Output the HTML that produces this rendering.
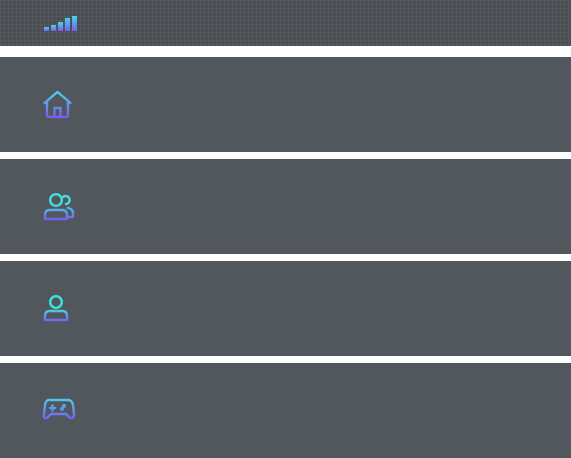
<!DOCTYPE html>
<html><head><style>
body{margin:0;width:571px;height:458px;background:#fff;position:relative;overflow:hidden}
.p{position:absolute;left:0;width:571px;background:#51575c}
.top{position:absolute;left:0;top:0;width:571px;height:46px;background-color:#4b4f53;
background-image:linear-gradient(rgba(255,255,255,.04) 1px,transparent 1px),linear-gradient(90deg,rgba(255,255,255,.04) 1px,transparent 1px);background-size:4px 4px}
svg{position:absolute}
</style></head><body>
<div class="top"></div>
<svg style="left:0;top:0" width="100" height="46">
<defs><linearGradient id="b" x1="0" y1="0" x2="0" y2="1"><stop offset="0" stop-color="#3fd9e6"/><stop offset="1" stop-color="#7a5cf0"/></linearGradient></defs>
<rect x="44" y="27" width="5" height="4" fill="url(#b)"/>
<rect x="51" y="25" width="5" height="6" fill="url(#b)"/>
<rect x="58" y="22" width="5" height="9" fill="url(#b)"/>
<rect x="65" y="18" width="5" height="13" fill="url(#b)"/>
<rect x="72" y="16" width="5" height="15" fill="url(#b)"/>
</svg>
<div class="p" style="top:57px;height:95px"></div>
<div class="p" style="top:159px;height:95px"></div>
<div class="p" style="top:261px;height:95px"></div>
<div class="p" style="top:363px;height:95px"></div>
<svg style="left:0;top:0" width="100" height="458" fill="none" stroke-width="2.4" stroke-linecap="round" stroke-linejoin="round">
<defs>
<linearGradient id="g1" gradientUnits="userSpaceOnUse" x1="0" y1="91" x2="0" y2="118"><stop offset="0" stop-color="#45d6ea"/><stop offset="1" stop-color="#7a58ee"/></linearGradient>
<linearGradient id="g2" gradientUnits="userSpaceOnUse" x1="0" y1="193" x2="0" y2="220"><stop offset=".4" stop-color="#3fe0e0"/><stop offset="1" stop-color="#7a58ee"/></linearGradient>
<linearGradient id="g3" gradientUnits="userSpaceOnUse" x1="0" y1="295" x2="0" y2="322"><stop offset=".5" stop-color="#3fe0e0"/><stop offset="1" stop-color="#7a58ee"/></linearGradient>
<linearGradient id="g4" gradientUnits="userSpaceOnUse" x1="0" y1="399" x2="0" y2="420"><stop offset="0" stop-color="#45cfe8"/><stop offset="1" stop-color="#7a58ee"/></linearGradient>
</defs>
<path stroke="url(#g1)" d="M44.5 103 L57.5 92 L70.5 103 M47 101 V115 Q47 117 49 117 H66 Q68 117 68 115 V101 M54.5 117 V108 H60.5 V117"/>
<g stroke="url(#g2)"><circle cx="56" cy="200" r="5.8"/><path d="M45 219 V215 Q45 210 50 210 H62 Q67 210 67 215 V219 Z"/><path d="M63 197 A4 4 0 1 1 66 204 M68 208 Q73 209 73 213 V217 H69"/></g>
<g stroke="url(#g3)"><circle cx="56" cy="302" r="5.8"/><path d="M45 320 V316 Q45 311 50 311 H62 Q67 311 67 316 V320 Z"/></g>
<g stroke="url(#g4)"><path d="M49 400 H68 Q72 400 73 405 L74 414 Q74 419 70 418 L66 414 H51 L47 418 Q43 419 44 414 L45 405 Q46 400 49 400 Z"/><path d="M50 408 H55 M52.5 405.5 V410.5"/><circle cx="64" cy="406" r=".8"/><circle cx="62" cy="409" r=".8"/></g>
</svg>
</body></html>
